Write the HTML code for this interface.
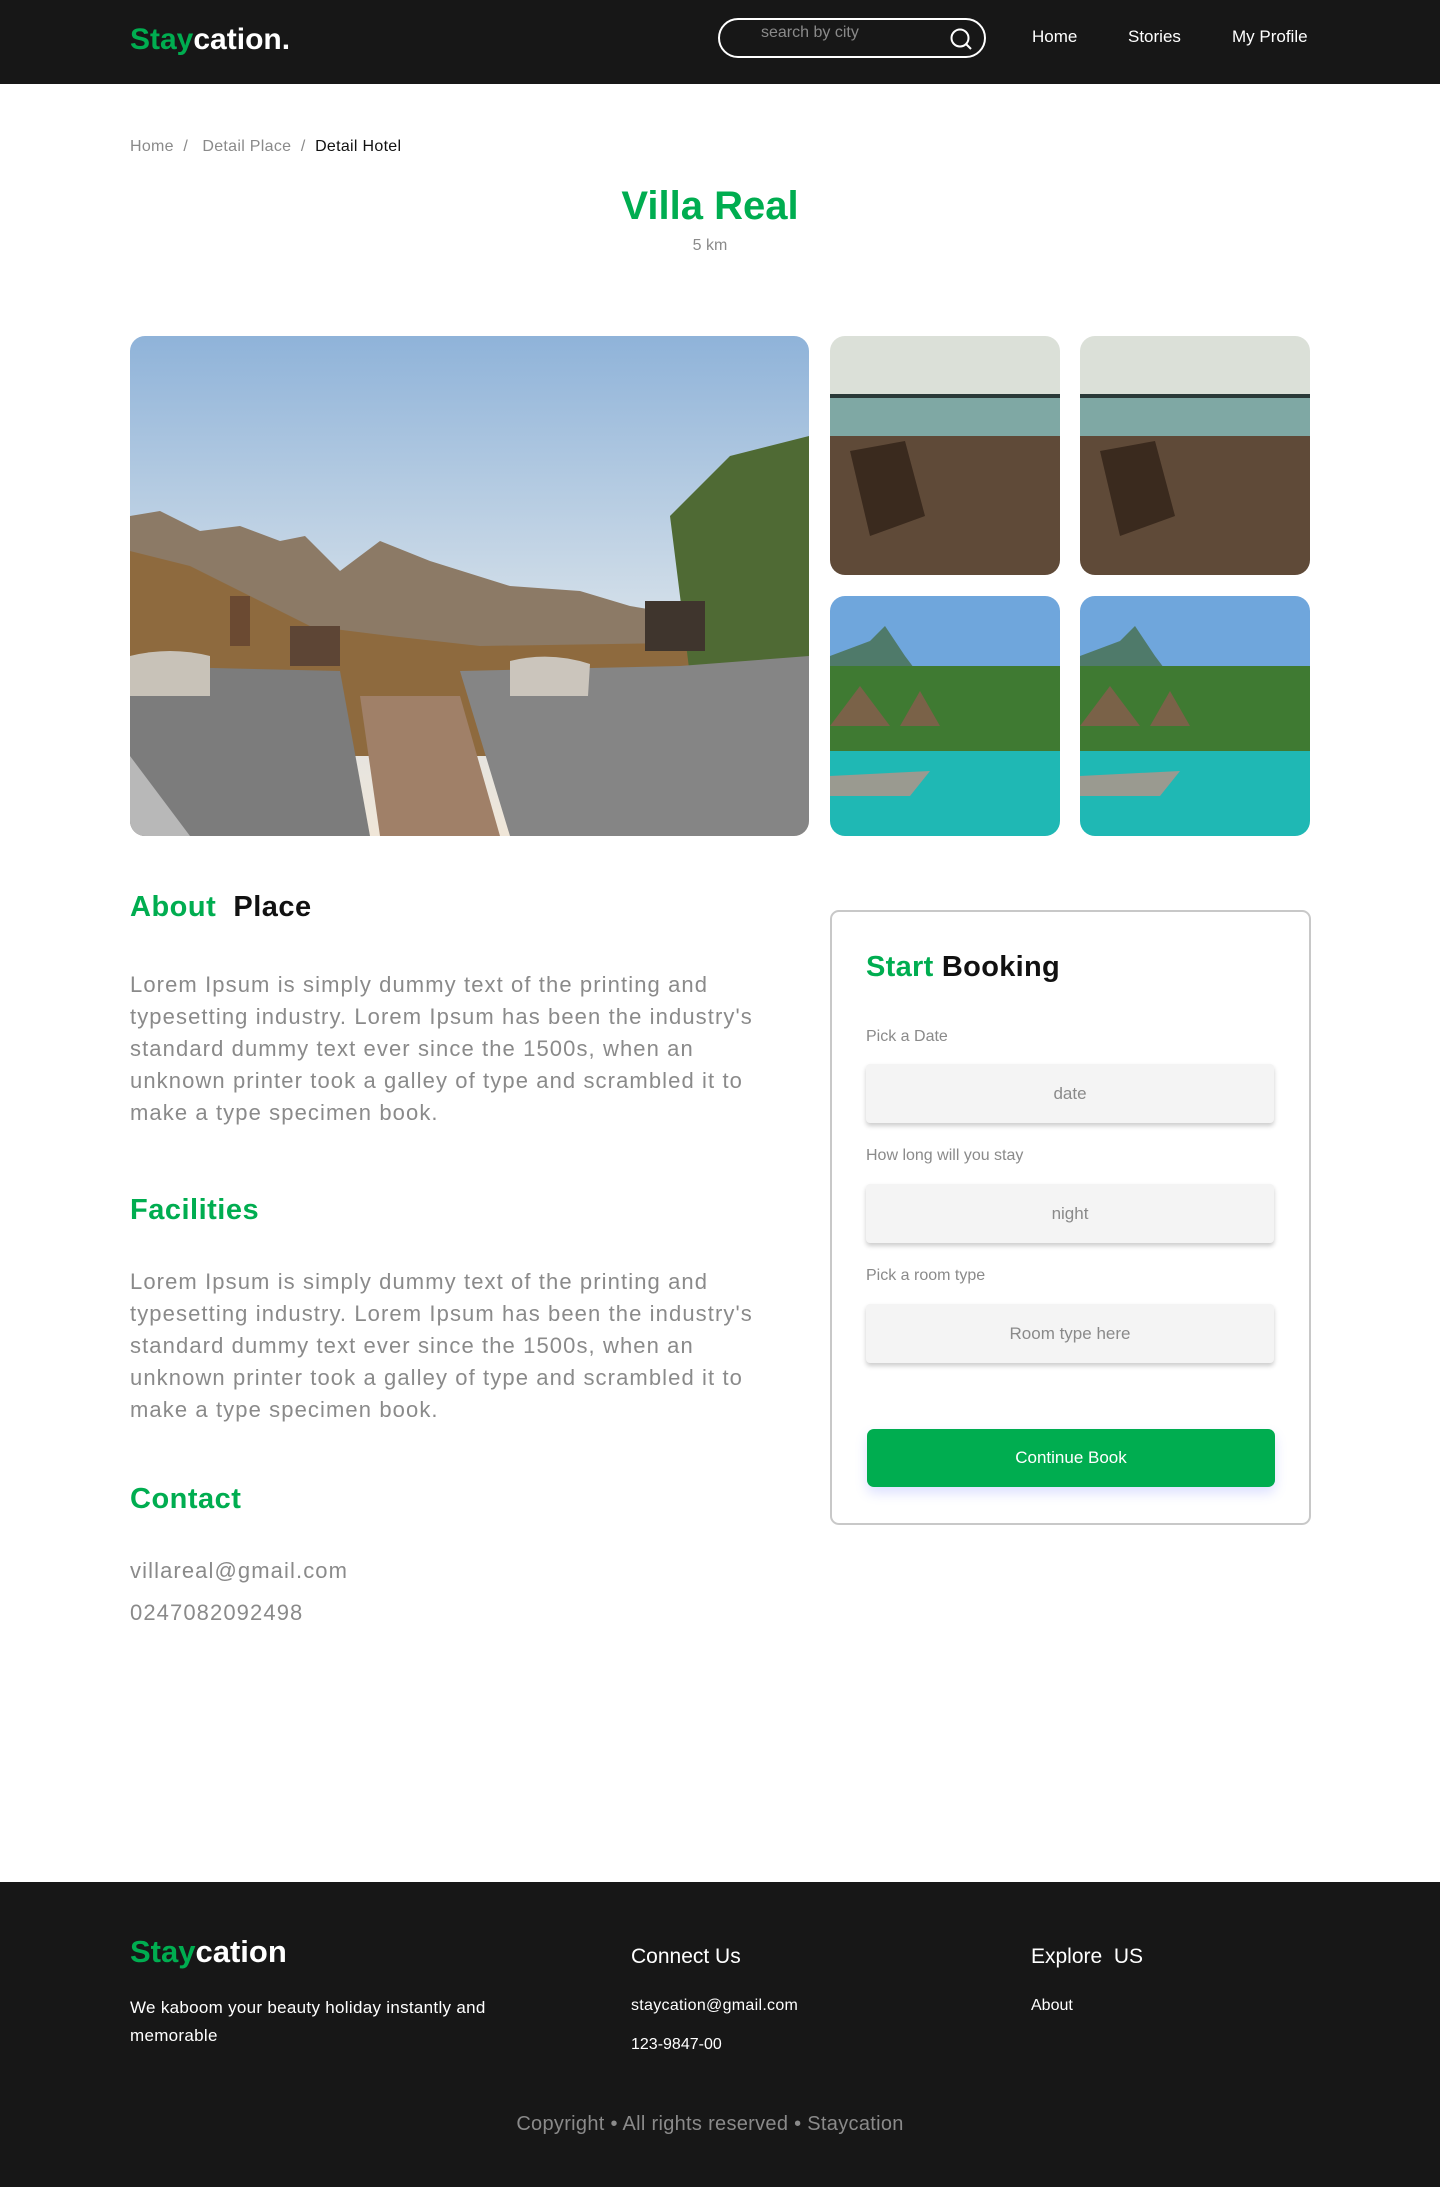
<!DOCTYPE html>
<html><head><meta charset="utf-8"><style>
*{margin:0;padding:0;box-sizing:border-box}
body{width:1440px;height:2187px;position:relative;background:#fff;font-family:"Liberation Sans",sans-serif;overflow:hidden}
.a{position:absolute;white-space:nowrap}
.g{color:#00AD50}
.nav{position:absolute;left:0;top:0;width:1440px;height:84px;background:#171717}
.img{position:absolute;border-radius:15px;overflow:hidden}
.img svg{display:block}
.p{position:absolute;left:130px;color:#8a8a8a;font-size:22px;line-height:32px;white-space:nowrap;letter-spacing:1.1px}
.lbl{position:absolute;left:866px;color:#8a8a8a;font-size:16px}
.inp{position:absolute;left:866px;width:408px;height:59px;background:#f4f4f4;border-radius:4px;box-shadow:0 3px 5px rgba(0,0,0,.2);color:#8a8a8a;font-size:17px;text-align:center;line-height:59px}
.foot{position:absolute;left:0;top:1882px;width:1440px;height:305px;background:#171717}
</style></head><body>
<div class="nav"></div>
<div class="a" style="left:130px;top:23px;font-size:30px;font-weight:bold;color:#fff"><span class="g">Stay</span>cation.</div>
<div class="a" style="left:718px;top:18px;width:268px;height:40px;border:2px solid #fff;border-radius:20px"></div>
<div class="a" style="left:761px;top:24px;font-size:16px;color:#8a8a8a">search by city</div>
<svg class="a" style="left:948px;top:26px" width="26" height="26" viewBox="0 0 26 26"><circle cx="12" cy="12" r="8.5" fill="none" stroke="#fff" stroke-width="2"/><line x1="18" y1="18" x2="23" y2="23" stroke="#fff" stroke-width="2"/></svg>
<div class="a" style="left:1032px;top:27px;font-size:17px;color:#fff">Home</div>
<div class="a" style="left:1128px;top:27px;font-size:17px;color:#fff">Stories</div>
<div class="a" style="left:1232px;top:27px;font-size:17px;color:#fff">My Profile</div>

<div class="a" style="left:130px;top:138px;font-size:16px;color:#8a8a8a;letter-spacing:.3px">Home &nbsp;/ &nbsp;&nbsp;Detail Place &nbsp;/ &nbsp;<span style="color:#111">Detail Hotel</span></div>
<div class="a" style="left:0;width:1420px;text-align:center;top:184px;font-size:40px;font-weight:bold;color:#00AD50">Villa Real</div>
<div class="a" style="left:0;width:1420px;text-align:center;top:237px;font-size:16px;color:#8a8a8a">5 km</div>

<div class="img" style="left:130px;top:336px;width:679px;height:500px">
<svg width="679" height="500"><defs><linearGradient id="sk" x1="0" y1="0" x2="0" y2="1"><stop offset="0" stop-color="#8fb3d9"/><stop offset=".6" stop-color="#d8e2ea"/><stop offset="1" stop-color="#f0e6d8"/></linearGradient></defs>
<rect width="679" height="500" fill="url(#sk)"/>
<path d="M0 180 L30 175 L70 195 L110 190 L150 205 L175 200 L210 235 L250 205 L300 225 L380 250 L450 255 L500 270 L560 280 L679 285 L679 400 L0 400Z" fill="#8c7a66"/>
<path d="M0 215 L60 230 L120 260 L180 290 L260 300 L350 310 L679 305 L679 420 L0 420Z" fill="#8e6a3e"/>
<path d="M540 180 L600 120 L679 100 L679 340 L560 340Z" fill="#4f6a34"/>
<rect x="100" y="260" width="20" height="50" fill="#6b4a32"/><rect x="160" y="290" width="50" height="40" fill="#5d4535"/><rect x="515" y="265" width="60" height="50" fill="#3f352d"/>
<path d="M0 330 L210 335 L240 500 L0 500Z" fill="#7c7c7c"/>
<path d="M330 335 L550 330 L679 320 L679 500 L380 500Z" fill="#858585"/>
<path d="M230 360 L330 360 L370 500 L250 500Z" fill="#a08068"/>
<path d="M0 320 Q40 310 80 320 L80 360 L0 360Z" fill="#c8c2b8"/><path d="M380 325 Q420 315 460 328 L458 360 L380 360Z" fill="#cbc5bc"/>
<path d="M0 420 L60 500 L0 500Z" fill="#b8b8b8"/></svg></div>

<div class="img" style="left:830px;top:336px;width:230px;height:239px"><svg width="230" height="239"><rect width="230" height="60" fill="#dbe0d8"/><rect y="60" width="230" height="45" fill="#7fa8a4"/><rect y="100" width="230" height="139" fill="#5f4a38"/><path d="M20 115 L75 105 L95 180 L40 200Z" fill="#3a2a1e"/><rect y="58" width="230" height="4" fill="#2a3a38"/></svg></div>
<div class="img" style="left:1080px;top:336px;width:230px;height:239px"><svg width="230" height="239"><rect width="230" height="60" fill="#dbe0d8"/><rect y="60" width="230" height="45" fill="#7fa8a4"/><rect y="100" width="230" height="139" fill="#5f4a38"/><path d="M20 115 L75 105 L95 180 L40 200Z" fill="#3a2a1e"/><rect y="58" width="230" height="4" fill="#2a3a38"/></svg></div>
<div class="img" style="left:830px;top:596px;width:230px;height:240px"><svg width="230" height="240"><rect width="230" height="90" fill="#6fa6dc"/><path d="M0 60 L40 45 L55 30 L75 60 L90 80 L0 90Z" fill="#4f7a6a"/><rect y="70" width="230" height="95" fill="#3f7a32"/><path d="M0 130 L30 90 L60 130Z M70 130 L90 95 L110 130Z" fill="#7a6248"/><rect y="155" width="230" height="85" fill="#1fb8b4"/><path d="M0 180 L100 175 L80 200 L0 200Z" fill="#9a9a90"/></svg></div>
<div class="img" style="left:1080px;top:596px;width:230px;height:240px"><svg width="230" height="240"><rect width="230" height="90" fill="#6fa6dc"/><path d="M0 60 L40 45 L55 30 L75 60 L90 80 L0 90Z" fill="#4f7a6a"/><rect y="70" width="230" height="95" fill="#3f7a32"/><path d="M0 130 L30 90 L60 130Z M70 130 L90 95 L110 130Z" fill="#7a6248"/><rect y="155" width="230" height="85" fill="#1fb8b4"/><path d="M0 180 L100 175 L80 200 L0 200Z" fill="#9a9a90"/></svg></div>

<div class="a" style="left:130px;top:891px;font-size:29px;font-weight:bold;color:#111;letter-spacing:.5px"><span class="g">About</span>&nbsp; Place</div>
<div class="p" style="top:969px">Lorem Ipsum is simply dummy text of the printing and<br>typesetting industry. Lorem Ipsum has been the industry's<br>standard dummy text ever since the 1500s, when an<br>unknown printer took a galley of type and scrambled it to<br>make a type specimen book.</div>
<div class="a g" style="left:130px;top:1194px;font-size:29px;font-weight:bold;letter-spacing:.5px">Facilities</div>
<div class="p" style="top:1266px">Lorem Ipsum is simply dummy text of the printing and<br>typesetting industry. Lorem Ipsum has been the industry's<br>standard dummy text ever since the 1500s, when an<br>unknown printer took a galley of type and scrambled it to<br>make a type specimen book.</div>
<div class="a g" style="left:130px;top:1483px;font-size:29px;font-weight:bold;letter-spacing:.5px">Contact</div>
<div class="a" style="left:130px;top:1558px;font-size:22px;color:#8a8a8a;letter-spacing:1.1px">villareal@gmail.com</div>
<div class="a" style="left:130px;top:1600px;font-size:22px;color:#8a8a8a;letter-spacing:1.1px">0247082092498</div>

<div class="a" style="left:830px;top:910px;width:481px;height:615px;border:2px solid #c8c8c8;border-radius:9px"></div>
<div class="a" style="left:866px;top:951px;font-size:29px;font-weight:bold;color:#111;letter-spacing:.3px"><span class="g">Start</span> Booking</div>
<div class="lbl" style="top:1028px">Pick a Date</div>
<div class="inp" style="top:1064px">date</div>
<div class="lbl" style="top:1147px">How long will you stay</div>
<div class="inp" style="top:1184px">night</div>
<div class="lbl" style="top:1267px">Pick a room type</div>
<div class="inp" style="top:1304px">Room type here</div>
<div class="a" style="left:867px;top:1429px;width:408px;height:58px;background:#00AD50;border-radius:7px;color:#fff;font-size:17px;text-align:center;line-height:58px;box-shadow:0 6px 12px rgba(80,100,255,.2)">Continue Book</div>

<div class="foot"></div>
<div class="a" style="left:130px;top:1934px;font-size:31px;font-weight:bold;color:#fff"><span class="g">Stay</span>cation</div>
<div class="a" style="left:130px;top:1994px;font-size:17px;color:#fff;line-height:28px;letter-spacing:.3px">We kaboom your beauty holiday instantly and<br>memorable</div>
<div class="a" style="left:631px;top:1945px;font-size:21px;color:#fff">Connect Us</div>
<div class="a" style="left:631px;top:1997px;font-size:16px;color:#fff;letter-spacing:.3px">staycation@gmail.com</div>
<div class="a" style="left:631px;top:2036px;font-size:16px;color:#fff">123-9847-00</div>
<div class="a" style="left:1031px;top:1945px;font-size:21px;color:#fff">Explore&nbsp; US</div>
<div class="a" style="left:1031px;top:1997px;font-size:16px;color:#fff">About</div>
<div class="a" style="left:0;width:1420px;text-align:center;top:2113px;font-size:20px;color:#8a8a8a;letter-spacing:.3px">Copyright • All rights reserved • Staycation</div>
</body></html>
